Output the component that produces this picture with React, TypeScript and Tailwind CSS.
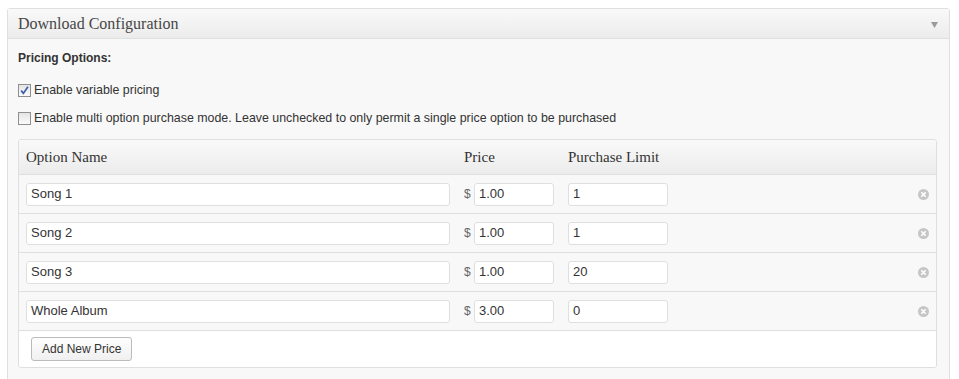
const rows = [
  { name: "Song 1", price: "1.00", limit: "1" },
  { name: "Song 2", price: "1.00", limit: "1" },
  { name: "Song 3", price: "1.00", limit: "20" },
  { name: "Whole Album", price: "3.00", limit: "0" },
];

const CheckBox = ({ checked }: { checked?: boolean }) => (
  <span className="flex h-[13px] w-[13px] shrink-0 items-center justify-center border border-[#8f8f8f] bg-gradient-to-b from-[#e4e4e4] to-[#fbfbfb]">
    {checked && (
      <svg width="9" height="9" viewBox="0 0 9 9">
        <path d="M1.2 4.6 L3.4 7.4 L7.9 0.8" fill="none" stroke="#3a5fa8" strokeWidth="1.7" />
      </svg>
    )}
  </span>
);

const RemoveIcon = () => (
  <svg width="11" height="11" viewBox="0 0 11 11">
    <circle cx="5.5" cy="5.5" r="5.5" fill="#c6c6c6" />
    <path d="M3.3 3.3 L7.7 7.7 M7.7 3.3 L3.3 7.7" stroke="#fff" strokeWidth="1.6" />
  </svg>
);

const TextBox = ({ value, width }: { value: string; width: string }) => (
  <div
    className={`flex h-[23px] ${width} items-center rounded-[3px] border border-[#dfdfdf] bg-white px-[4px] text-[13px] text-[#333]`}
  >
    {value}
  </div>
);

export default function App() {
  return (
    <div className="h-[379px] overflow-hidden bg-white pl-[7px] pt-[8px] font-['Liberation_Sans',Arial,sans-serif]">
      <div className="w-[943px] rounded-t-[3px] border border-[#dfdfdf] bg-[#f8f8f8]">
        <div className="flex h-[30px] items-center justify-between border-b border-[#dfdfdf] bg-gradient-to-b from-[#f9f9f9] to-[#ececec] pl-[10px] pr-[11px]">
          <span className="font-['Liberation_Serif',Georgia,serif] text-[16px] text-[#464646]">
            Download Configuration
          </span>
          <svg width="7" height="6" viewBox="0 0 7 6" className="mt-[2px]">
            <path d="M0 0 H7 L3.5 6 Z" fill="#9a9a9a" />
          </svg>
        </div>

        <div className="px-[10px] pb-[20px] pt-[12px] text-[12.4px] text-[#333]">
          <div className="text-[12px] font-bold leading-[15px]">Pricing Options:</div>
          <label className="mt-[17px] flex items-center gap-[3px] leading-[15px]">
            <CheckBox checked />
            Enable variable pricing
          </label>
          <label className="mt-[13px] flex items-center gap-[3px] leading-[15px]">
            <CheckBox />
            Enable multi option purchase mode. Leave unchecked to only permit a single price option to be purchased
          </label>

          <div className="mt-[13px] w-[919px] overflow-hidden rounded-[3px] border border-[#dfdfdf]">
            <div className="flex h-[35px] items-center border-b border-[#dfdfdf] bg-gradient-to-b from-[#f9f9f9] to-[#ececec] pl-[7px] font-['Liberation_Serif',Georgia,serif] text-[15px] text-[#333]">
              <div className="w-[438px]">Option Name</div>
              <div className="w-[104px]">Price</div>
              <div>Purchase Limit</div>
            </div>
            {rows.map((r) => (
              <div
                key={r.name}
                className="flex h-[39px] items-center border-b border-[#dfdfdf] bg-[#f8f8f8] pl-[7px] pr-[7px]"
              >
                <TextBox value={r.name} width="w-[424px]" />
                <span className="ml-[14px] w-[10px] text-[12px] text-[#666]">$</span>
                <TextBox value={r.price} width="w-[80px]" />
                <div className="ml-[14px]">
                  <TextBox value={r.limit} width="w-[100px]" />
                </div>
                <div className="flex flex-1 justify-end">
                  <RemoveIcon />
                </div>
              </div>
            ))}
            <div className="flex h-[36px] items-center bg-white pl-[12px]">
              <button className="h-[24px] rounded-[3px] border border-[#bbb] bg-gradient-to-b from-[#fefefe] to-[#f0f0f0] px-[10px] text-[12px] text-[#333]">
                Add New Price
              </button>
            </div>
          </div>
        </div>
      </div>
    </div>
  );
}
